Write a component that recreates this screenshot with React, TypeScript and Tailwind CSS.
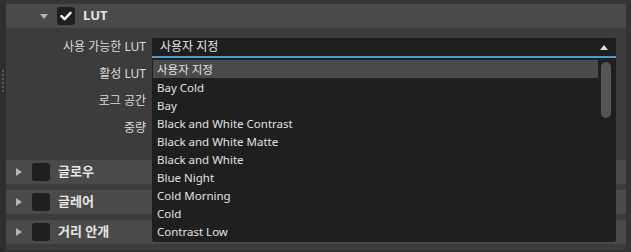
import React from 'react';

const font = { fontFamily: '"Noto Sans", "Noto Sans CJK KR", sans-serif' };

const luts = [
  '사용자 지정',
  'Bay Cold',
  'Bay',
  'Black and White Contrast',
  'Black and White Matte',
  'Black and White',
  'Blue Night',
  'Cold Morning',
  'Cold',
  'Contrast Low',
];

const Check: React.FC<{ checked?: boolean }> = ({ checked }) => (
  <div className="w-[18px] h-[18px] rounded-[3px] bg-[#1f1f1f] flex items-center justify-center">
    {checked && (
      <svg width="12" height="10" viewBox="0 0 12 10">
        <path d="M1.5 5.2 L4.6 8.2 L10.5 1.8" fill="none" stroke="#f2f2f2" strokeWidth="2.5" strokeLinecap="round" strokeLinejoin="round" />
      </svg>
    )}
  </div>
);

const Section: React.FC<{ title: string }> = ({ title }) => (
  <div className="h-[24px] bg-[#4a4a4a] flex items-center pl-[10px]">
    <svg width="6" height="8" viewBox="0 0 6 8" className="mr-[10px]">
      <path d="M0 0 L6 4 L0 8 Z" fill="#b4b4b4" />
    </svg>
    <Check />
    <span className="ml-[8px] text-[13px] font-bold text-[#e6e6e6]">{title}</span>
  </div>
);

export default function App() {
  return (
    <div className="w-[631px] h-[252px] bg-[#3c3c3c] flex overflow-hidden" style={font}>
      <div className="w-[6px] bg-[#2e2e2e] flex flex-col items-center pt-[70px] gap-[2px]">
        {[0, 1, 2, 3, 4, 5].map((i) => (
          <div key={i} className="w-[2px] h-[2px] bg-[#5a5a5a]" />
        ))}
      </div>
      <div className="flex-1 flex flex-col">
        <div className="h-[4px] bg-[#363636]" />
        <div className="h-[24px] bg-[#4a4a4a] flex items-center pl-[34px]">
          <svg width="8" height="5" viewBox="0 0 8 5" className="mr-[9px]">
            <path d="M0 0 L8 0 L4 5 Z" fill="#b4b4b4" />
          </svg>
          <Check checked />
          <span className="ml-[8px] text-[13px] font-bold text-[#e6e6e6]">LUT</span>
        </div>
        <div className="h-[132px] pt-[10px] flex flex-col gap-[9px] text-[12px] text-[#dcdcdc]">
          <div className="h-[18px] flex items-center">
            <div className="w-[140px] text-right">사용 가능한 LUT</div>
            <div className="ml-[6px] w-[464px] relative">
              <div className="h-[18px] bg-[#1e1e1e] rounded-t-[2px] flex items-center pl-[8px] pr-[8px]">
                <span className="flex-1 text-[#e6e6e6]">사용자 지정</span>
                <svg width="8" height="5" viewBox="0 0 8 5">
                  <path d="M0 5 L8 5 L4 0 Z" fill="#e0e0e0" />
                </svg>
              </div>
              <div className="absolute left-0 top-[18px] w-[464px] z-10">
                <div className="h-[2px] bg-[#4b9cd6]" />
                <div className="h-[184px] bg-[#1f1f1f] rounded-b-[2px] flex pt-[2px] pl-[1px]">
                  <div className="w-[445px] flex flex-col text-[11.5px]">
                    {luts.map((l, i) => (
                      <div
                        key={l}
                        className={`h-[18px] flex items-center pl-[4px] pt-[1px] text-[#e2e2e2] ${i === 0 ? 'bg-[#4a4a4a]' : ''}`}
                      >
                        {l}
                      </div>
                    ))}
                  </div>
                  <div className="ml-[3px] mt-[2px] w-[10px] h-[56px] rounded-full bg-[#555555]" />
                </div>
              </div>
            </div>
          </div>
          <div className="h-[18px] flex items-center">
            <div className="w-[140px] text-right">활성 LUT</div>
          </div>
          <div className="h-[18px] flex items-center">
            <div className="w-[140px] text-right">로그 공간</div>
          </div>
          <div className="h-[18px] flex items-center">
            <div className="w-[140px] text-right">중량</div>
          </div>
        </div>
        <div className="flex flex-col gap-[6px]">
          <Section title="글로우" />
          <Section title="글레어" />
          <Section title="거리 안개" />
        </div>
        <div className="h-[6px] bg-[#3c3c3c]" />
        <div className="flex-1 bg-[#333333]" />
      </div>
      <div className="w-[5px] bg-[#333333]" />
    </div>
  );
}
